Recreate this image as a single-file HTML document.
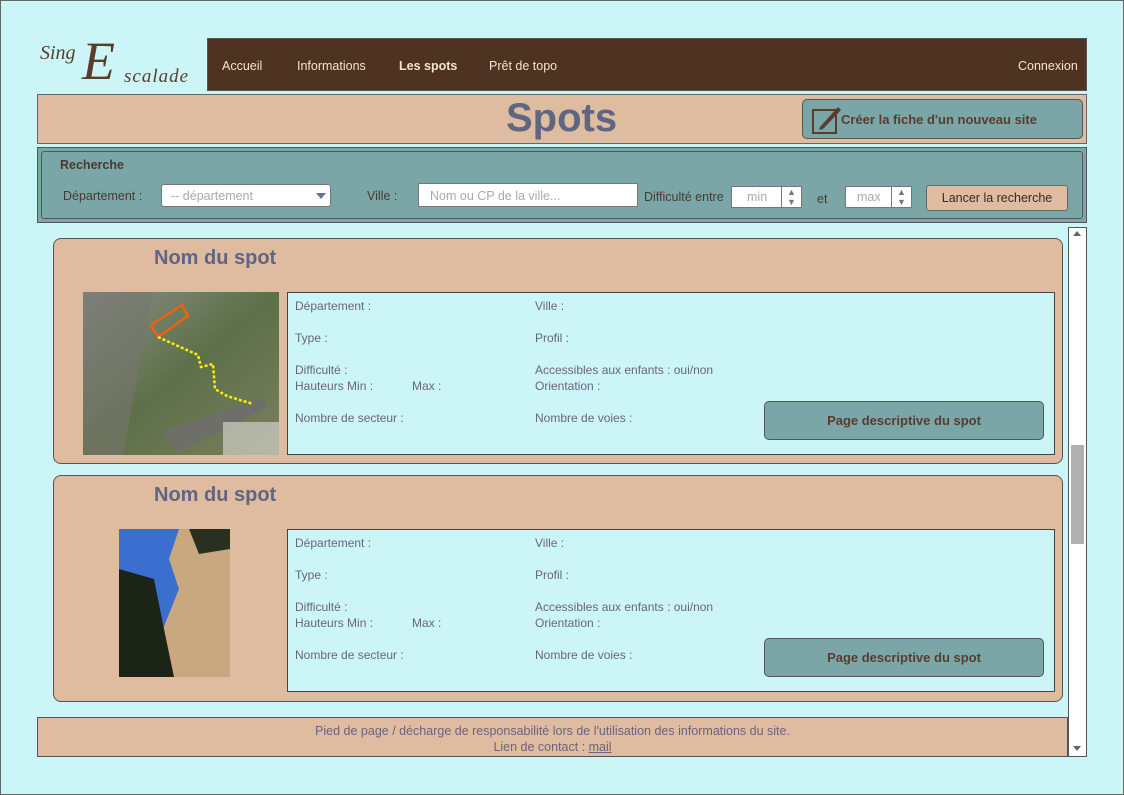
<!DOCTYPE html>
<html><head><meta charset="utf-8"><style>
*{box-sizing:border-box}
body{margin:0;width:1124px;height:795px;background:#cbf5f6;font-family:"Liberation Sans",sans-serif;position:relative;overflow:hidden}
.a{position:absolute}
.nav{left:207px;top:38px;width:880px;height:53px;background:#4f3322;border:1px solid #555;color:#f3e3cf;font-size:12.5px}
.nav span{position:absolute;top:20px}
.hdr{left:37px;top:94px;width:1050px;height:50px;background:#dfbba0;border:1px solid #666}
.btn{background:#7aa6a8;border:1px solid #555;border-radius:5px;color:#5a3c2c;font-weight:bold;font-size:13px}
.srch{left:37px;top:147px;width:1050px;height:76px;background:#7aa6a8;border:1px solid #555}
.lbl{font-size:12.5px;color:#4a3a30}
.inp{background:#fff;border:1px solid #777;color:#aaa;font-size:12.5px}
.card{left:53px;width:1010px;background:#dfbba0;border:1px solid #555;border-radius:8px}
.card h2{position:absolute;left:100px;top:8px;margin:0;font-size:20px;color:#5e6684}
.info{position:absolute;left:233px;width:768px;background:#cbf5f6;border:1px solid #444;font-size:12px;color:#6a6482}
.info span{position:absolute}
</style></head><body>
<div class="a" style="left:0;top:0;width:1124px;height:795px;border:1px solid #666"></div>
<div class="a" style="left:38px;top:40px;width:168px;height:50px">
<span class="a" style="left:2px;top:2px;font:italic 20px 'Liberation Serif',serif;color:#5a3c2c">Sing</span>
<span class="a" style="left:44px;top:-4px;font:italic 54px 'Liberation Serif',serif;color:#5a3c2c;line-height:50px">E</span>
<span class="a" style="left:86px;top:26px;font:italic 19px 'Liberation Serif',serif;color:#5a3c2c;letter-spacing:1px">scalade</span>
</div>
<div class="a nav"><span style="left:14px">Accueil</span><span style="left:89px">Informations</span><span style="left:191px;font-weight:bold">Les spots</span><span style="left:281px">Prêt de topo</span><span style="left:810px">Connexion</span></div>
<div class="a hdr"><div class="a" style="left:468px;top:1px;font-size:40px;font-weight:bold;color:#5e6684">Spots</div>
<div class="a btn" style="left:764px;top:4px;width:281px;height:40px">
<svg class="a" style="left:8px;top:3px" width="32" height="32" viewBox="0 0 32 32"><rect x="2" y="7" width="23" height="23" fill="none" stroke="#5a3c2c" stroke-width="2"/><path d="M9 24 L27 4 L30 7 L12 26 L8 27 Z" fill="#5a3c2c"/></svg>
<span class="a" style="left:38px;top:12px">Créer la fiche d'un nouveau site</span></div></div>
<div class="a srch"><div class="a" style="left:3px;top:3px;width:1042px;height:68px;border:1px solid #555;border-radius:3px"></div>
<span class="a lbl" style="left:22px;top:10px;font-weight:bold">Recherche</span>
<span class="a lbl" style="left:25px;top:41px">Département :</span>
<div class="a inp" style="left:123px;top:36px;width:170px;height:23px;border-radius:3px;padding:4px 9px">-- département<span class="a" style="right:4px;top:8px;border:5px solid transparent;border-top:6px solid #6b6ea0"></span></div>
<span class="a lbl" style="left:329px;top:41px">Ville :</span>
<div class="a inp" style="left:380px;top:35px;width:220px;height:24px;padding:5px 11px">Nom ou CP de la ville...</div>
<span class="a lbl" style="left:606px;top:42px">Difficulté entre</span>
<div class="a inp" style="left:693px;top:38px;width:71px;height:22px;padding:3px 15px">min<span class="a" style="left:49px;top:0;width:20px;height:20px;border-left:1px solid #777;color:#777;font-size:9px;text-align:center;line-height:10px">▲<br>▼</span></div>
<span class="a lbl" style="left:779px;top:44px">et</span>
<div class="a inp" style="left:807px;top:38px;width:67px;height:22px;padding:3px 11px">max<span class="a" style="left:45px;top:0;width:20px;height:20px;border-left:1px solid #777;color:#777;font-size:9px;text-align:center;line-height:10px">▲<br>▼</span></div>
<div class="a" style="left:888px;top:37px;width:142px;height:26px;background:#dfbba0;border:1px solid #666;border-radius:3px;font-size:12.5px;color:#3a2a20;text-align:center;line-height:24px">Lancer la recherche</div>
</div>
<div class="a" style="left:1068px;top:227px;width:19px;height:530px;background:#fff;border:1px solid #555">
<span class="a" style="left:4px;top:3px;border:4px solid transparent;border-bottom:5px solid #666;border-top:0"></span>
<div class="a" style="left:2px;top:217px;width:13px;height:99px;background:#b0b0b0"></div>
<span class="a" style="left:4px;bottom:5px;border:4px solid transparent;border-top:5px solid #666;border-bottom:0"></span></div>
<div class="a card" style="top:238px;height:226px"><h2>Nom du spot</h2>
<svg class="a" style="left:29px;top:53px" width="196" height="163"><defs><linearGradient id="g" x1="0" y1="0" x2="1" y2="1"><stop offset="0" stop-color="#8a8f88"/><stop offset=".5" stop-color="#5d7048"/><stop offset="1" stop-color="#7a8060"/></linearGradient></defs><rect width="196" height="163" fill="url(#g)"/><path d="M0 0 L70 0 L40 163 L0 163Z" fill="#77746e" opacity=".6"/><path d="M80 140 L180 105 L185 115 L95 160Z" fill="#6f6f6a"/><rect x="140" y="130" width="56" height="33" fill="#cfcfc8" opacity=".7"/><path d="M68 33 L99 13 L105 24 L75 45Z" fill="none" stroke="#f06010" stroke-width="2.5"/><path d="M75 45 L115 63 L118 75 L130 72 L132 97 L144 104 L170 112" fill="none" stroke="#ffee00" stroke-width="2.5" stroke-dasharray="3 2"/></svg>
<div class="info" style="top:53px;height:163px"><span style="left:7px;top:6px">Département :</span><span style="left:247px;top:6px">Ville :</span><span style="left:7px;top:38px">Type :</span><span style="left:247px;top:38px">Profil :</span><span style="left:7px;top:70px">Difficulté :</span><span style="left:247px;top:70px">Accessibles aux enfants : oui/non</span><span style="left:7px;top:86px">Hauteurs Min :</span><span style="left:124px;top:86px">Max :</span><span style="left:247px;top:86px">Orientation :</span><span style="left:7px;top:118px">Nombre de secteur :</span><span style="left:247px;top:118px">Nombre de voies :</span>
<div class="a btn" style="left:476px;top:108px;width:280px;height:39px;text-align:center;line-height:37px">Page descriptive du spot</div></div></div>
<div class="a card" style="top:475px;height:227px"><h2>Nom du spot</h2>
<svg class="a" style="left:65px;top:53px" width="111" height="148"><rect width="111" height="148" fill="#3a6fd0"/><path d="M60 0 L111 0 L111 148 L55 148 L40 110 L60 60 L50 30Z" fill="#c9a880"/><path d="M0 40 L35 50 L45 100 L55 148 L0 148Z" fill="#1c2418"/><path d="M70 0 L111 0 L111 20 L80 25Z" fill="#2a3020"/></svg>
<div class="info" style="top:53px;height:163px"><span style="left:7px;top:6px">Département :</span><span style="left:247px;top:6px">Ville :</span><span style="left:7px;top:38px">Type :</span><span style="left:247px;top:38px">Profil :</span><span style="left:7px;top:70px">Difficulté :</span><span style="left:247px;top:70px">Accessibles aux enfants : oui/non</span><span style="left:7px;top:86px">Hauteurs Min :</span><span style="left:124px;top:86px">Max :</span><span style="left:247px;top:86px">Orientation :</span><span style="left:7px;top:118px">Nombre de secteur :</span><span style="left:247px;top:118px">Nombre de voies :</span>
<div class="a btn" style="left:476px;top:108px;width:280px;height:39px;text-align:center;line-height:37px">Page descriptive du spot</div></div></div>
<div class="a" style="left:37px;top:717px;width:1031px;height:40px;background:#dfbba0;border:1px solid #555;text-align:center;font-size:12.5px;color:#6a6482;line-height:16px;padding-top:5px">Pied de page / décharge de responsabilité lors de l'utilisation des informations du site.<br>Lien de contact : <u>mail</u></div>
</body></html>
